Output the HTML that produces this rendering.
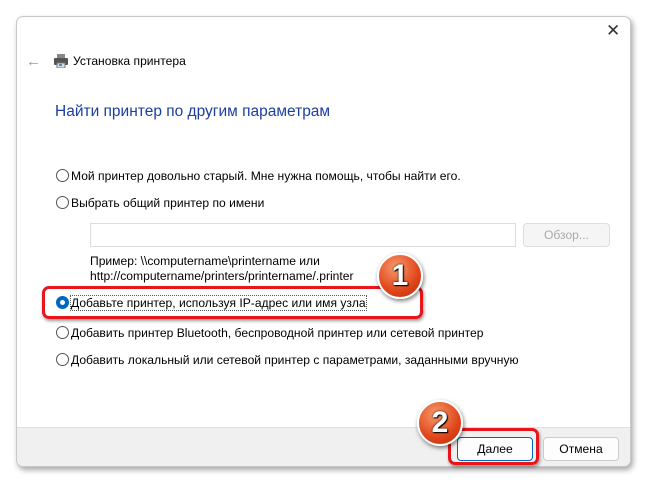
<!DOCTYPE html><html><head><style>
body{margin:0;width:646px;height:486px;background:#fff;position:relative;overflow:hidden;font-family:"Segoe UI","Liberation Sans",sans-serif;font-size:12.1px;color:#000}
.win{position:absolute;left:16px;top:16px;width:613px;height:449px;border:1px solid #c8c8c8;border-radius:7px;background:#fff;box-shadow:2px 3px 6px rgba(0,0,0,.35);overflow:hidden}
.a{position:absolute;white-space:nowrap}
.r{position:absolute;width:11px;height:11px;border:1px solid #555;border-radius:50%;background:#fff}
.foot{position:absolute;left:0;right:0;bottom:0;height:38px;background:#f0f0f0;border-top:1px solid #e0e0e0}
.btn{position:absolute;height:22px;border:1px solid #ccc;border-radius:4px;background:#fdfdfd;text-align:center;line-height:22px}
.badge{position:absolute;width:42px;height:42px;border-radius:50%;background:radial-gradient(circle at 40% 30%,#f79a6c,#e0451a 60%,#b52d0c);border:2px solid #fff;box-shadow:1px 2px 4px rgba(0,0,0,.5);color:#fff;font:bold 30px "Liberation Sans",sans-serif;text-align:center;line-height:42px;text-shadow:0 0 2px #000,1px 1px 1px #000}
.red{position:absolute;border:3px solid #e8151b;border-radius:7px;box-shadow:1px 2px 3px rgba(0,0,0,.4)}
</style></head><body>
<div class="win">
<div class="a" style="left:589px;top:4px;font-size:17px;color:#333">✕</div>
<div class="a" style="left:9px;top:36px;font-size:15px;color:#999">←</div>
<svg class="a" style="left:36px;top:37px" width="16" height="14"><rect x="4" y="0" width="8" height="4" fill="#888"/><rect x="1" y="4" width="14" height="7" rx="1" fill="#555"/><rect x="4" y="9" width="8" height="5" fill="#ddd" stroke="#777"/><rect x="6" y="10" width="3" height="2" fill="#3a8ee6"/></svg>
<div class="a" style="left:56px;top:37px">Установка принтера</div>
<div class="a" style="left:38px;top:86px;font-size:15.5px;color:#1a3fa0">Найти принтер по другим параметрам</div>
<div class="r" style="left:39px;top:152px"></div><div class="a" style="left:54px;top:152px">Мой принтер довольно старый. Мне нужна помощь, чтобы найти его.</div>
<div class="r" style="left:39px;top:179px"></div><div class="a" style="left:54px;top:179px">Выбрать общий принтер по имени</div>
<div class="a" style="left:73px;top:206px;width:424px;height:22px;border:1px solid #ddd;background:#fff"></div>
<div class="btn" style="left:506px;top:206px;width:85px;color:#aaa;background:#f5f5f5;border-color:#ddd">Обзор...</div>
<div class="a" style="left:73px;top:237px;line-height:15px">Пример: \\computername\printername или<br>http://computername/printers/printername/.printer</div>
<div class="r" style="left:39px;top:279px;border:4px solid #0067c0;width:5px;height:5px"></div><div class="a" style="left:54px;top:279px;outline:1px dotted #555">Добавьте принтер, используя IP-адрес или имя узла</div>
<div class="r" style="left:39px;top:309px"></div><div class="a" style="left:54px;top:309px">Добавить принтер Bluetooth, беспроводной принтер или сетевой принтер</div>
<div class="r" style="left:39px;top:336px"></div><div class="a" style="left:54px;top:336px">Добавить локальный или сетевой принтер с параметрами, заданными вручную</div>
<div class="foot">
<div class="btn" style="left:440px;top:9px;width:74px;border-color:#0067c0">Далее</div>
<div class="btn" style="left:526px;top:9px;width:74px">Отмена</div>
</div>
</div>
<div class="red" style="left:42px;top:286px;width:375px;height:27px"></div>
<div class="red" style="left:448px;top:428px;width:85px;height:31px"></div>
<div class="badge" style="left:377px;top:253px">1</div>
<div class="badge" style="left:417px;top:400px">2</div>
</body></html>
